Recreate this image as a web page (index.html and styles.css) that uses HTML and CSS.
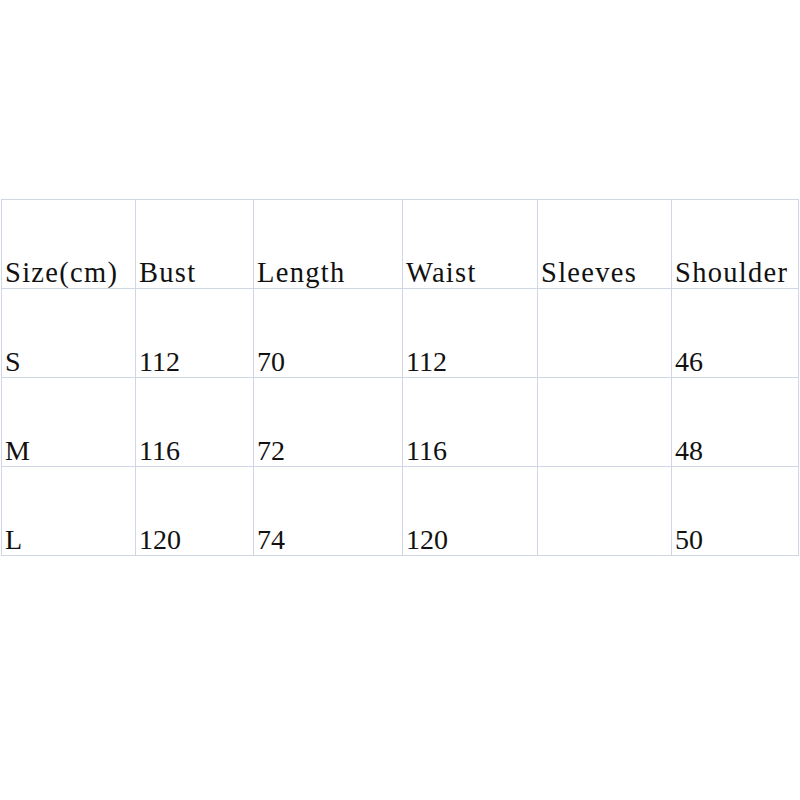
FILE: index.html
```html
<!DOCTYPE html>
<html>
<head>
<meta charset="utf-8">
<link rel="stylesheet" href="styles.css">
</head>
<body>
<div class="sheet">
  <table class="size-table">
    <colgroup>
      <col class="c1"><col class="c2"><col class="c3"><col class="c4"><col class="c5"><col class="c6">
    </colgroup>
    <tr class="head">
      <td>Size(cm)</td>
      <td>Bust</td>
      <td>Length</td>
      <td>Waist</td>
      <td>Sleeves</td>
      <td>Shoulder</td>
    </tr>
    <tr>
      <td>S</td><td>112</td><td>70</td><td>112</td><td></td><td>46</td>
    </tr>
    <tr>
      <td>M</td><td>116</td><td>72</td><td>116</td><td></td><td>48</td>
    </tr>
    <tr>
      <td>L</td><td>120</td><td>74</td><td>120</td><td></td><td>50</td>
    </tr>
  </table>
</div>
</body>
</html>
```

FILE: styles.css
```css
html, body {
  margin: 0;
  padding: 0;
  background: #ffffff;
}

.sheet {
  padding-top: 199px;
  padding-left: 1px;
}

.size-table {
  border-collapse: collapse;
  table-layout: fixed;
  width: 797px;
  font-family: "Liberation Serif", "Times New Roman", serif;
  font-size: 28px;
  line-height: 31px;
  color: #111111;
}

.c1 { width: 134px; }
.c2 { width: 118px; }
.c3 { width: 149px; }
.c4 { width: 135px; }
.c5 { width: 134px; }
.c6 { width: 127px; }

.size-table td {
  border: 1px solid #d0d6e3;
  height: 88px;
  padding: 0 0 0 3px;
  vertical-align: bottom;
  white-space: nowrap;
  overflow: hidden;
}

.size-table .head td {
  font-size: 28.5px;
  letter-spacing: 1.3px;
}
```
